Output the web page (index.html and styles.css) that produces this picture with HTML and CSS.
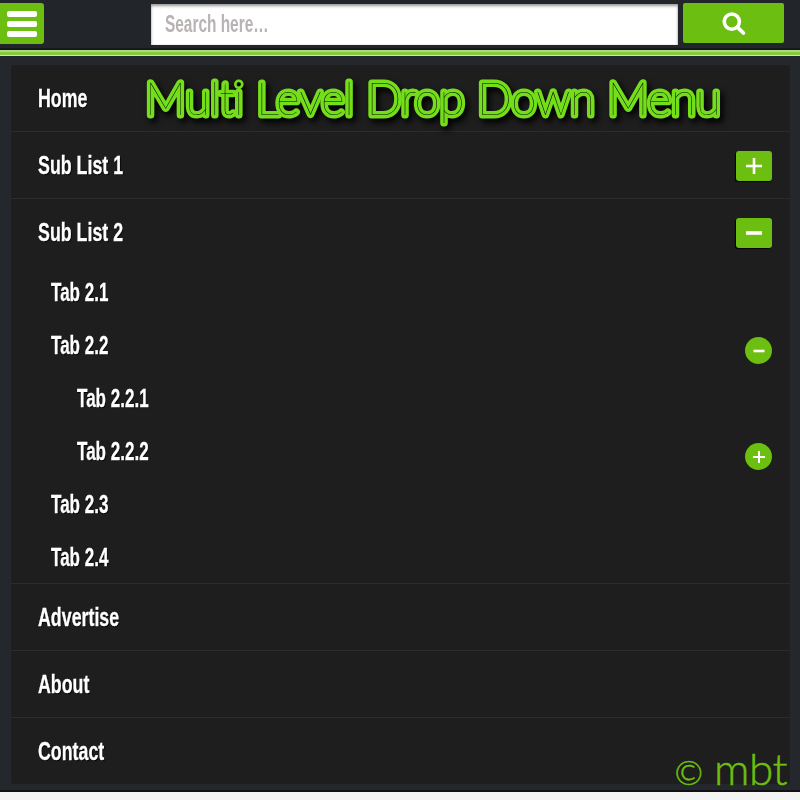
FILE: index.html
```html
<!DOCTYPE html>
<html lang="en">
<head>
<meta charset="utf-8">
<title>Multi Level Drop Down Menu</title>
<link rel="stylesheet" href="styles.css">
</head>
<body>
<div class="page">
  <header class="topbar">
    <button class="burger" aria-label="Menu"><span></span><span></span><span></span></button>
    <div class="search-input"><span class="placeholder">Search here…</span></div>
    <button class="search-btn" aria-label="Search">
      <svg width="26" height="26" viewBox="0 0 26 26"><circle cx="10.8" cy="11.6" r="7.6" fill="none" stroke="#fff" stroke-width="3.6"/><path d="M16.4 17.2 L22.4 23" stroke="#fff" stroke-width="3.8" stroke-linecap="round"/></svg>
    </button>
  </header>
  <div class="rule"></div>
  <nav class="menu">
    <div class="row"><span class="label">Home</span></div>
    <div class="row"><span class="label">Sub List 1</span><span class="tog">
      <svg width="18" height="18" viewBox="0 0 18 18"><path d="M9 1v16M1 9h16" stroke="#fff" stroke-width="2.6"/></svg></span></div>
    <div class="group">
      <div class="row plain"><span class="label">Sub List 2</span><span class="tog">
        <svg width="18" height="18" viewBox="0 0 18 18"><path d="M1 9h16" stroke="#fff" stroke-width="3.6"/></svg></span></div>
      <div class="sub"><span class="label tab">Tab 2.1</span></div>
      <div class="sub"><span class="label tab">Tab 2.2</span><span class="circ"><svg width="14" height="14" viewBox="0 0 14 14"><path d="M1.5 7h11" stroke="#fff" stroke-width="2.6"/></svg></span></div>
      <div class="sub deep"><span class="label tab">Tab 2.2.1</span></div>
      <div class="sub deep"><span class="label tab">Tab 2.2.2</span><span class="circ"><svg width="14" height="14" viewBox="0 0 14 14"><path d="M7 1v12M1 7h12" stroke="#fff" stroke-width="2"/></svg></span></div>
      <div class="sub"><span class="label tab">Tab 2.3</span></div>
      <div class="sub"><span class="label tab">Tab 2.4</span></div>
    </div>
    <div class="row"><span class="label">Advertise</span></div>
    <div class="row"><span class="label">About</span></div>
    <div class="row last"><span class="label">Contact</span></div>
  </nav>
  <svg class="title" width="600" height="70" viewBox="0 0 600 70"><text class="title-text" x="5" y="47">Multi Level Drop Down Menu</text></svg>
  <div class="mark"><span class="copy">©</span> mbt</div>
</div>
</body>
</html>
```
FILE: styles.css
```css
* { box-sizing: border-box; }
html, body { margin: 0; background: #f4f4f4; }
body { font-family: "Liberation Sans", Arial, sans-serif; }
.page { position: relative; width: 800px; height: 792px; background: #24282c; border-bottom: 2px solid #111; }
.topbar { height: 50px; display: flex; align-items: flex-start; padding-top: 3px; background: #22262a; border-bottom: 2px solid #15181a; }
.burger { width: 44px; height: 41px; padding: 0 0 0 7px; margin: 0; border: 0; border-radius: 0 3px 3px 0; background: #6cbf10; display: flex; flex-direction: column; justify-content: center; gap: 4px; }
.burger span { display: block; width: 30px; height: 6px; background: #fff; border-radius: 2px; }
.search-input { width: 527px; height: 41px; margin: 1px 0 0 107px; padding: 0 14px; background: #fff; box-shadow: inset 0 2px 3px #999, inset 0 0 1px #888; line-height: 41px; }
.placeholder { display: inline-block; color: #b9b3b3; font-size: 23px; font-weight: 700; transform: scaleX(0.67); transform-origin: left center; white-space: nowrap; }
.search-btn { width: 101px; height: 40px; margin-left: 5px; padding: 0; border: 0; border-radius: 2px; background: #6cbf10; display: flex; align-items: center; justify-content: center; }
.rule { height: 6px; background: #86c940; border-top: 2px solid #a9d97a; border-bottom: 1px solid #d5dfc8; }
.menu { margin: 9px 10px 0 11px; background: #1e1e1e; border-radius: 3px; display: flex; flex-direction: column; }
.row { height: 67px; display: flex; align-items: center; justify-content: space-between; padding: 0 18px 0 27px; border-bottom: 1px solid #2a2c2e; }
.row.plain { height: 66px; border-bottom: 0; }
.row.last { height: 66px; border-bottom: 0; }
.group { border-bottom: 1px solid #2a2c2e; }
.label { display: inline-block; color: #fff; font-size: 26px; font-weight: 700; line-height: 30px; -webkit-text-stroke: 0.3px #fff; text-shadow: 1px 1px 1px #000; transform: scaleX(0.685); transform-origin: left center; white-space: nowrap; }
.label.tab { transform: scaleX(0.655); }
.tog { width: 36px; height: 30px; margin-top: 1px; border-radius: 3px; background: #6cbf10; box-shadow: -1px 1px 1px #000; display: flex; align-items: center; justify-content: center; }
.sub { height: 53px; position: relative; display: flex; align-items: center; padding-left: 40px; }
.sub.deep { padding-left: 66px; }
.circ { position: absolute; right: 18px; top: 19px; width: 27px; height: 27px; border-radius: 50%; background: #6cbf10; display: flex; align-items: center; justify-content: center; }
.title { position: absolute; left: 140px; top: 68px; filter: drop-shadow(3px 4px 3px #000); }
.title-text { font-family: "Lato", sans-serif; font-size: 46px; font-weight: 100; letter-spacing: -0.3px; fill: #000; stroke: #74de1a; stroke-width: 7px; stroke-linejoin: round; stroke-linecap: round; paint-order: stroke fill; }
.mark { position: absolute; right: 13px; top: 748px; font-family: "Lato", sans-serif; font-size: 44px; font-weight: 300; line-height: 40px; color: #6cbf10; letter-spacing: -0.5px; -webkit-text-stroke: 0.5px #6cbf10; white-space: nowrap; }
.copy { font-size: 34px; }
```
